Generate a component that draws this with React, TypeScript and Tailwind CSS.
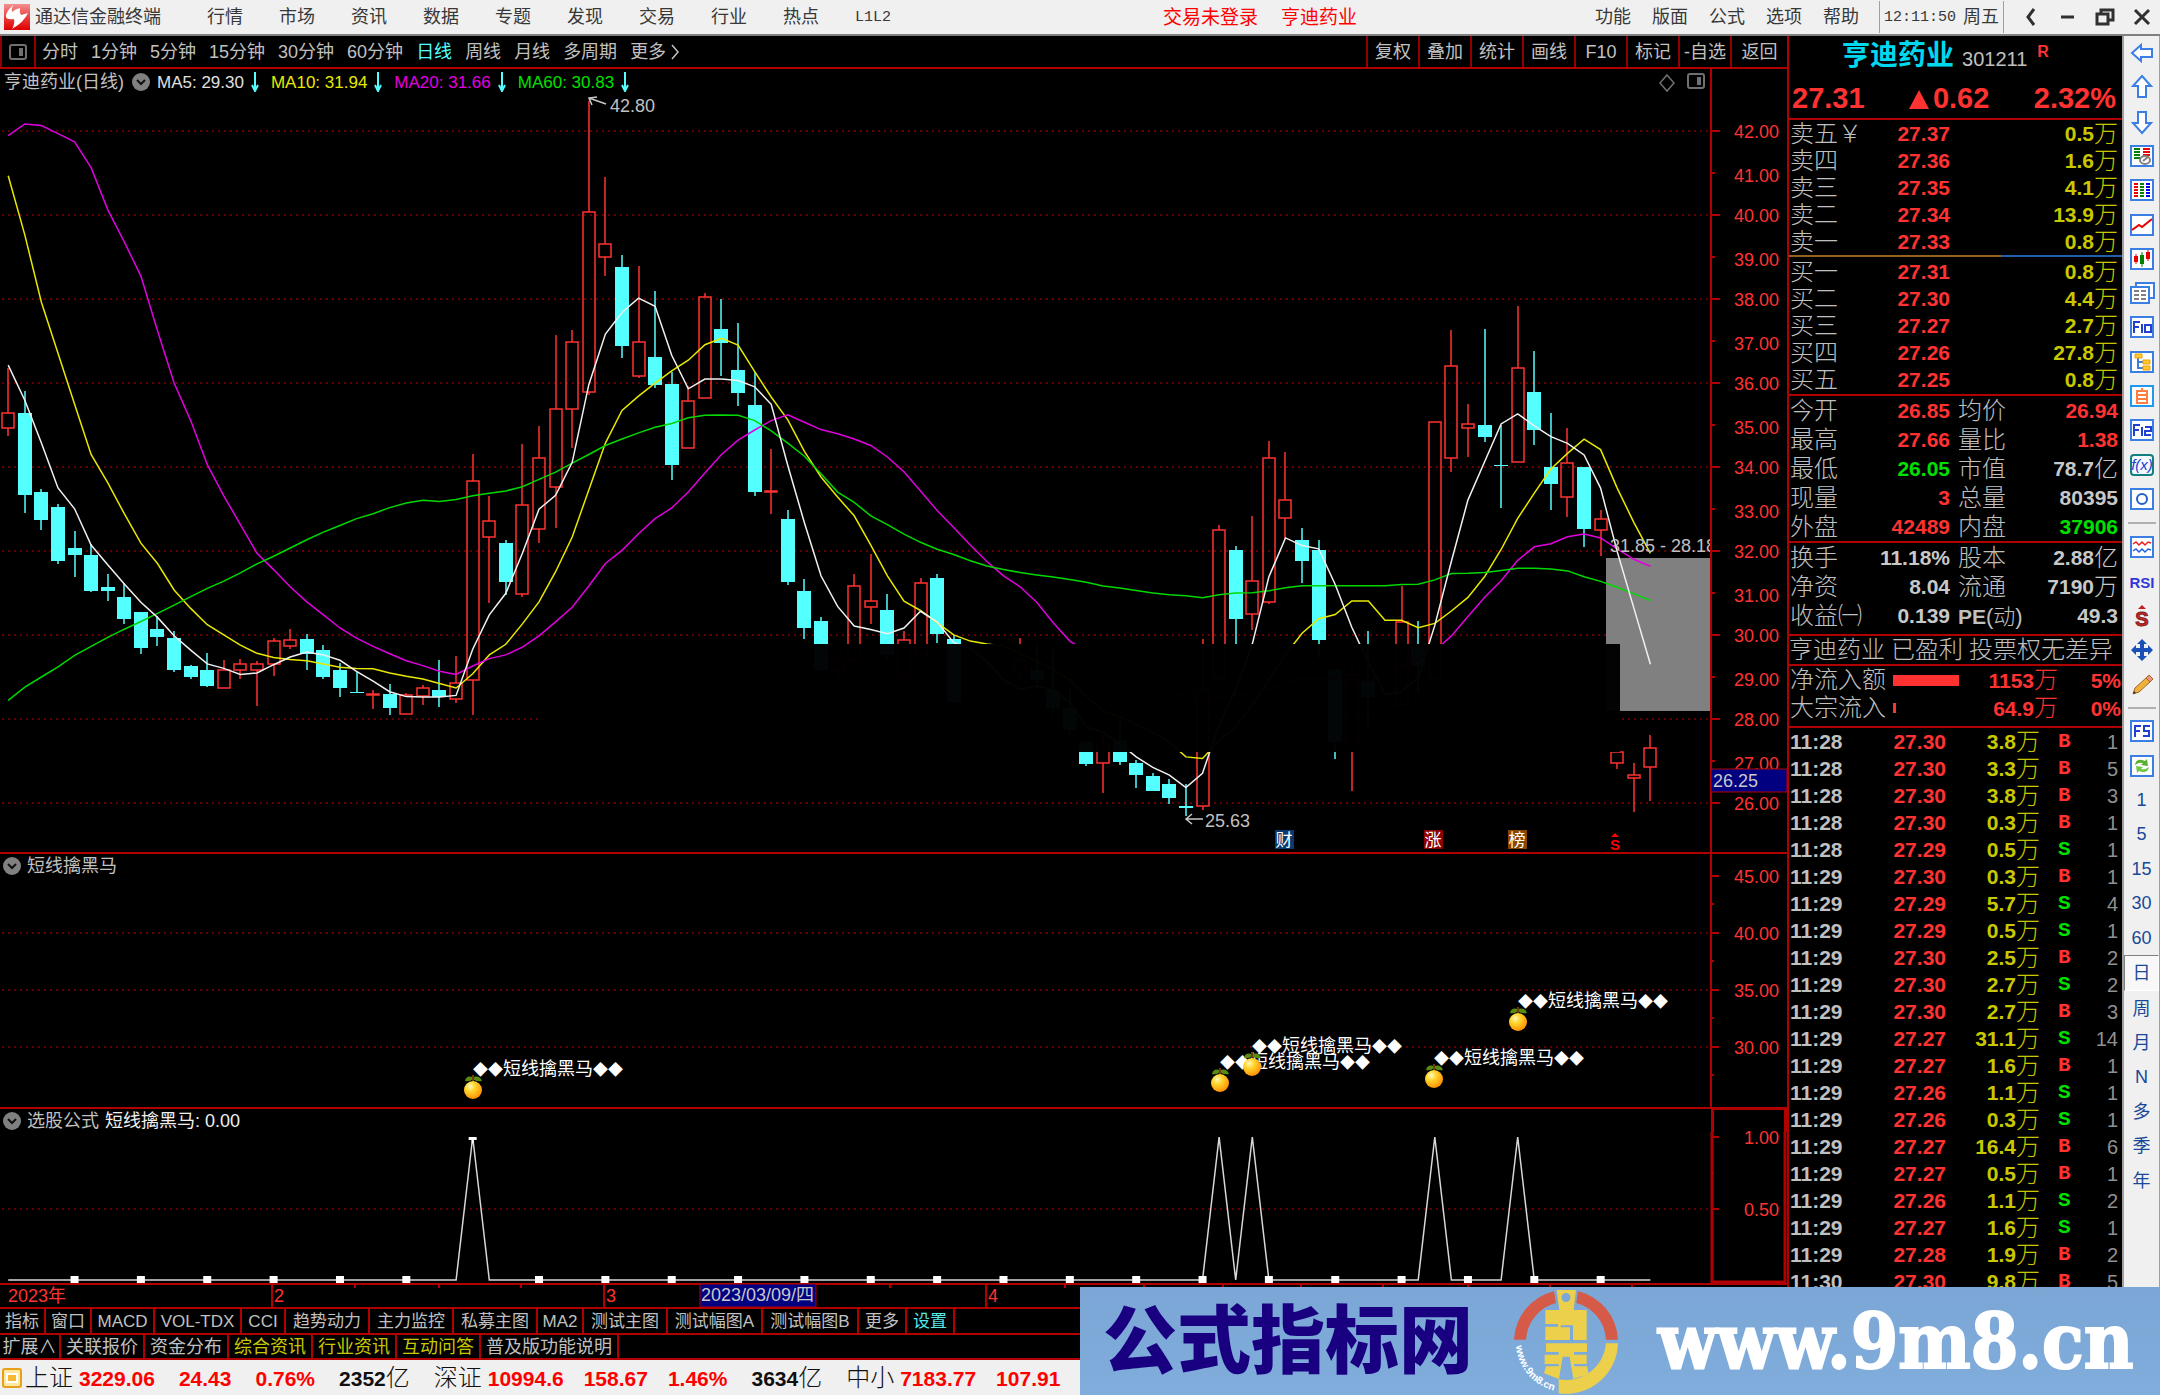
import React from "react";

type Candle = [kind: "u" | "d", high: number, top: number, bottom: number, low: number];

const RED = "#ff3232";
const LINE = "#b00000";
const CYAN = "#54ffff";
const STEP = 16.588;
const xAt = (i: number) => 8.2 + i * STEP;

/* Daily candles, from the oldest to the newest. */
const candles: (Candle | null)[] = [
  ["u", 368, 413, 428, 436], ["d", 391, 413, 495, 513], ["d", 489, 492, 520, 530], ["d", 504, 507, 561, 564],
  ["d", 531, 548, 555, 577], ["d", 544, 555, 591, 592], ["d", 574, 587, 591, 601], ["d", 583, 597, 619, 624],
  ["d", 612, 612, 648, 654], ["d", 616, 629, 637, 646], ["d", 631, 638, 670, 672], ["d", 665, 666, 677, 679],
  ["d", 653, 670, 686, 687], ["u", 660, 670, 688, 688], ["u", 659, 664, 670, 679], ["u", 661, 664, 670, 706],
  ["u", 638, 641, 664, 676], ["u", 629, 640, 646, 649], ["d", 634, 639, 654, 670], ["d", 645, 650, 677, 679],
  ["d", 663, 670, 688, 697], ["d", 672, 692, 693, 693], ["u", 690, 694, 695, 709], ["d", 684, 694, 708, 715],
  ["u", 693, 695, 714, 714], ["u", 685, 688, 696, 705], ["d", 660, 690, 697, 707], ["u", 656, 683, 699, 703],
  ["u", 454, 481, 680, 715], ["u", 496, 521, 537, 603], ["d", 540, 543, 582, 595], ["u", 444, 505, 594, 597],
  ["u", 426, 458, 529, 543], ["u", 335, 409, 487, 528], ["u", 330, 342, 409, 448], ["u", 101, 212, 392, 395],
  ["u", 177, 244, 257, 276], ["d", 255, 267, 346, 358], ["u", 266, 342, 376, 378], ["d", 291, 357, 385, 388],
  ["d", 372, 384, 465, 480], ["u", 386, 401, 448, 448], ["u", 293, 297, 398, 398], ["d", 299, 329, 343, 376],
  ["d", 323, 370, 393, 406], ["d", 372, 405, 492, 496], ["u", 449, 491, 492, 514], ["d", 510, 519, 582, 585],
  ["d", 579, 591, 628, 639], ["d", 617, 621, 670, 670], ["u", 655, 662, 670, 678], ["u", 574, 586, 660, 660],
  ["u", 554, 601, 607, 624], ["d", 594, 610, 655, 660], ["u", 631, 640, 678, 678], ["u", 578, 583, 655, 655],
  ["d", 574, 578, 634, 643], ["d", 635, 639, 702, 702], null, null,
  null, ["u", 638, 660, 672, 680], ["d", 644, 670, 680, 690], ["d", 650, 690, 708, 715], ["d", 690, 708, 730, 735],
  ["d", 740, 742, 764, 766],
  ["u", 735, 744, 763, 793], ["d", 717, 740, 762, 765], ["d", 760, 763, 775, 788], ["d", 773, 776, 791, 791],
  ["d", 779, 784, 798, 804], ["d", 784, 806, 808, 816], ["u", 639, 690, 806, 810], ["u", 525, 530, 678, 685],
  ["d", 546, 550, 619, 644], ["u", 516, 581, 614, 630], ["u", 441, 458, 602, 604], ["u", 452, 500, 518, 539],
  ["d", 528, 540, 561, 583], ["d", 540, 550, 640, 658], ["d", 668, 670, 742, 759], ["u", 660, 674, 744, 791],
  ["d", 631, 682, 697, 728], null, ["u", 586, 622, 705, 705], ["d", 621, 647, 666, 693],
  ["u", 422, 422, 678, 678], ["u", 330, 366, 458, 472], ["u", 404, 424, 428, 457], ["d", 329, 425, 437, 442],
  ["d", 425, 465, 466, 508], ["u", 306, 368, 462, 462], ["d", 351, 392, 430, 445], ["d", 413, 467, 484, 510],
  ["u", 428, 463, 497, 517], ["d", 467, 467, 529, 547], ["u", 510, 519, 530, 556], ["u", 752, 752, 763, 769],
  ["u", 763, 775, 778, 812], ["u", 735, 748, 767, 801],
];

/* Moving averages: the first run holds days 0-65, the second one days 66-99. */
const average = (first: number[], second: number[]) =>
  [...first.map((v) => 90 + v * 0.4082), ...second.map((v) => 250 + v * 0.389)]
    .map((y, i) => `${xAt(i).toFixed(1)},${y.toFixed(1)}`)
    .join(" ");

const averages = [
  {
    color: "#e8e800",
    points: average(
      [210, 355, 520, 645, 770, 893, 962, 1038, 1110, 1160, 1225, 1270, 1310, 1335, 1360, 1380, 1390, 1395, 1398, 1406, 1414, 1417, 1418, 1428, 1436, 1443, 1454, 1465, 1430, 1384, 1358, 1308, 1254, 1180, 1095, 980, 865, 785, 750, 718, 688, 662, 624, 608, 625, 690, 752, 808, 885, 948, 997, 1043, 1115, 1190, 1252, 1275, 1305, 1335, 1350, 1357, 1362, 1380, 1400, 1420, 1445, 1485],
      [1185, 1200, 1220, 1240, 1265, 1303, 1307, 1262, 1225, 1170, 1105, 1040, 985, 948, 937, 902, 902, 952, 952, 971, 960, 928, 893, 840, 770, 690, 625, 563, 523, 486, 513, 612, 700, 780],
    ),
  },
  {
    color: "#e000e0",
    points: average(
      [112, 83, 87, 107, 127, 190, 293, 372, 456, 590, 718, 810, 918, 994, 1065, 1135, 1175, 1217, 1254, 1286, 1318, 1343, 1363, 1381, 1398, 1410, 1424, 1432, 1411, 1393, 1384, 1365, 1337, 1303, 1267, 1215, 1160, 1128, 1087, 1050, 1024, 985, 938, 893, 858, 833, 810, 796, 814, 832, 842, 855, 871, 899, 935, 982, 1030, 1072, 1115, 1155, 1190, 1217, 1255, 1305, 1350, 1375],
      [1080, 1095, 1110, 1125, 1140, 1145, 1150, 1150, 1145, 1140, 1130, 1115, 1100, 1100, 1100, 1105, 1110, 1090, 1070, 1050, 1030, 992, 942, 893, 850, 798, 763, 755, 737, 730, 740, 768, 795, 813],
    ),
  },
  {
    color: "#00d800",
    points: average(
      [1495, 1463, 1438, 1413, 1385, 1363, 1341, 1321, 1302, 1282, 1262, 1241, 1221, 1203, 1183, 1161, 1142, 1122, 1102, 1083, 1067, 1050, 1038, 1023, 1012, 1005, 1008, 1003, 994, 988, 982, 972, 954, 936, 914, 893, 871, 855, 840, 826, 817, 803, 797, 796, 797, 810, 835, 865, 897, 940, 985, 1010, 1043, 1065, 1088, 1108, 1125, 1138, 1153, 1166, 1175, 1182, 1188, 1193, 1199, 1206],
      [864, 869, 875, 882, 886, 889, 894, 886, 882, 881, 876, 868, 863, 863, 863, 863, 863, 863, 860, 859, 848, 832, 831, 829, 824, 818, 818, 820, 825, 840, 852, 867, 884, 901],
    ),
  },
  {
    color: "#f0f0f0",
    points: average(
      [674, 760, 865, 975, 1026, 1115, 1163, 1210, 1255, 1292, 1337, 1372, 1406, 1417, 1432, 1428, 1408, 1389, 1377, 1384, 1397, 1424, 1448, 1474, 1486, 1487, 1487, 1483, 1370, 1286, 1233, 1135, 1027, 993, 912, 722, 598, 545, 510, 530, 650, 732, 708, 708, 712, 727, 770, 920, 1060, 1190, 1265, 1313, 1322, 1332, 1318, 1277, 1303, 1354, 1368, 1400, 1445, 1468, 1460, 1470, 1500, 1560],
      [1240, 1268, 1303, 1330, 1350, 1382, 1345, 1220, 1130, 1013, 840, 740, 760, 768, 860, 970, 1060, 1143, 1135, 1100, 965, 800, 643, 545, 447, 421, 452, 480, 497, 527, 612, 775, 920, 1065],
    ),
  },
];

const prices = Array.from({ length: 17 }, (_, i) => 42 - i);
const signals = [
  { x: 473, y: 1090 }, { x: 1220, y: 1083 }, { x: 1252, y: 1067 }, { x: 1434, y: 1079 }, { x: 1518, y: 1022 },
];

const spikes = [28, 73, 75, 86, 91];
const signalLine = Array.from({ length: 100 }, (_, i) => `${xAt(i).toFixed(1)},${spikes.includes(i) ? 1137 : 1280}`).join(" ");

function Grid({ y }: { y: number }) {
  return <line x1="2" x2="1710" y1={y} y2={y} stroke="#c00000" strokeWidth="1" strokeDasharray="2 4" />;
}

function AxisLabel({ y, children }: { y: number; children: React.ReactNode }) {
  return (
    <text x="1779" y={y + 7} textAnchor="end" fontSize="18" fill={RED}>
      {children}
    </text>
  );
}

function Badge({ x, color, text }: { x: number; color: string; text: string }) {
  return (
    <g>
      <rect x={x} y="830" width="19" height="19" fill={color} />
      <text x={x + 9} y="846" textAnchor="middle" fontSize="17" fill="#fff">{text}</text>
    </g>
  );
}

function PriceChart() {
  return (
    <svg viewBox="0 95 1787 757" className="block w-full overflow-visible" role="img" aria-label="日线">
      {prices.filter((p) => p % 2 === 0).map((p) => <Grid key={p} y={131 + (42 - p) * 42} />)}
      <rect x="1606" y="558" width="104" height="153" fill="#808080" />
      {candles.map((c, i) => {
        if (!c) return null;
        const [kind, high, top, bottom, low] = c;
        const x = Math.round(xAt(i));
        return kind === "u" ? (
          <g key={i} stroke={RED} strokeWidth="1.5" fill="none">
            <path d={`M${x} ${high}V${top}M${x} ${bottom}V${low}`} />
            <rect x={x - 6} y={top} width="12" height={bottom - top} />
          </g>
        ) : (
          <g key={i} fill={CYAN}>
            <path d={`M${x} ${high}V${low}`} stroke={CYAN} strokeWidth="1.5" />
            <rect x={x - 7} y={top} width="14" height={bottom - top} />
          </g>
        );
      })}
      {averages.map((a) => (
        <polyline key={a.color} points={a.points} fill="none" stroke={a.color} strokeWidth="1.5" />
      ))}
      <rect x="538" y="644" width="1082" height="108" fill="#000" fillOpacity="0.975" />
      <g fill="none" stroke="#c8c8c8" strokeWidth="1.5">
        <path d="M606 104L589 98M597 97L589 98L592 105" />
        <path d="M1203 819H1186M1192 814L1186 819L1192 824" />
      </g>
      <g fontSize="18" fill="#c0c0c0">
        <text x="610" y="112">42.80</text>
        <text x="1205" y="827">25.63</text>
        <svg x="1600" y="530" width="110" height="28">
          <text x="10" y="22">31.85 - 28.18</text>
        </svg>
      </g>
      <Badge x={1275} color="#083a70" text="财" />
      <Badge x={1424} color="#8b0000" text="涨" />
      <Badge x={1508} color="#8a4500" text="榜" />
      <path d="M1611 837L1615 833L1619 837Z" fill="#ff0000" />
      <text x="1615" y="850" textAnchor="middle" fontSize="15" fontWeight="700" fill="#ff0000">S</text>
      <path d="M1711 95V852" stroke={LINE} strokeWidth="2" />
      {prices.map((p) => {
        const y = 131 + (42 - p) * 42;
        const even = p % 2 === 0;
        return (
          <g key={p}>
            <path d={`M1711 ${y}h${even ? 9 : 4}`} stroke={LINE} strokeWidth="2" />
            <AxisLabel y={even ? y : y + 2}>{p.toFixed(2)}</AxisLabel>
          </g>
        );
      })}
      <rect x="1711" y="769" width="76" height="23" fill="#000080" stroke={LINE} />
      <text x="1713" y="787" fontSize="18" fill="#c8c8c8">26.25</text>
    </svg>
  );
}

function Orange({ x, y }: { x: number; y: number }) {
  return (
    <g>
      <path d={`M${x - 8} ${y - 9}q1-6 8-4q7-2 9 4q-6 1-9-2q-3 3-8 2Z`} fill="#5a8a10" />
      <path d={`M${x} ${y - 8}V${y - 15}`} stroke="#6a3a10" strokeWidth="2" />
      <circle cx={x} cy={y} r="9" fill="url(#orange)" />
    </g>
  );
}

function SignalChart() {
  return (
    <svg viewBox="0 877 1787 230" className="block w-full overflow-visible" role="img" aria-label="短线擒黑马">
      <defs>
        <radialGradient id="orange" cx="0.35" cy="0.3" r="0.75">
          <stop offset="0" stopColor="#fff8c0" />
          <stop offset="0.35" stopColor="#ffd830" />
          <stop offset="1" stopColor="#ff8c00" />
        </radialGradient>
      </defs>
      {[933, 990, 1047].map((y) => <Grid key={y} y={y} />)}
      {signals.map((s) => (
        <text key={s.x} x={s.x} y={s.y - 15} fontSize="18" fill="#fff">
          <tspan fontSize="15">◆◆</tspan>短线擒黑马<tspan fontSize="15">◆◆</tspan>
        </text>
      ))}
      {signals.map((s) => <Orange key={s.x} {...s} />)}
      <path d="M1711 877V1107" stroke={LINE} strokeWidth="2" />
      {[876, 933, 990, 1047].map((y, i) => (
        <g key={y}>
          <path d={`M1711 ${y}h8M1711 ${y + 28}h3`} stroke={LINE} strokeWidth="2" />
          <AxisLabel y={y}>{(45 - i * 5).toFixed(2)}</AxisLabel>
        </g>
      ))}
    </svg>
  );
}

function FormulaChart() {
  return (
    <svg viewBox="0 1132 1787 151" className="block w-full overflow-visible" role="img" aria-label="选股公式">
      <Grid y={1209} />
      <polyline points={signalLine} fill="none" stroke="#d8d8d8" strokeWidth="1.5" />
      {Array.from({ length: 24 }, (_, i) => (i + 1) * 4).map((i) =>
        i === 28 ? (
          <path key={i} d={`M${xAt(i) - 4} 1137h8v3h-3v3h-2v-3h-3Z`} fill="#fff" />
        ) : (
          <rect key={i} x={xAt(i) - 4} y="1276" width="8" height="7" fill="#fff" />
        ),
      )}
      <path d="M1712 1132V1282H1785V1132" fill="none" stroke={LINE} strokeWidth="3" />
      <path d="M1711 1137h8M1711 1173h3M1711 1209h8" stroke={LINE} strokeWidth="2" />
      <AxisLabel y={1137}>1.00</AxisLabel>
      <AxisLabel y={1209}>0.50</AxisLabel>
    </svg>
  );
}

function DateAxis() {
  return (
    <svg viewBox="0 1282 1787 24" className="block w-full" role="img" aria-label="日期">
      <path d="M0 1283H1787M272 1283V1306M604 1283V1306M986 1283V1306" stroke={LINE} strokeWidth="2" />
      <path d="M355 1283v4M439 1283v4M521 1283v4M890 1283v4M1065 1283v4M1144 1283v4M1223 1283v4M1301 1283v4M1383 1283v4M1468 1283v4M1550 1283v4M1632 1283v4" stroke={LINE} strokeWidth="2" />
      <rect x="700" y="1283" width="116" height="23" fill="#000080" stroke={LINE} />
      <g fontSize="18" fill={RED}>
        <text x="8" y="1301">2023年</text>
        <text x="274" y="1301">2</text>
        <text x="606" y="1301">3</text>
        <text x="988" y="1301">4</text>
        <text x="701" y="1300" fill="#c8c8c8">2023/03/09/四</text>
      </g>
    </svg>
  );
}

function Toggle() {
  return (
    <button aria-label="展开" className="block size-[18px] shrink-0">
      <svg viewBox="0 0 18 18" className="size-full">
        <circle cx="9" cy="9" r="9" fill="#808080" />
        <path d="M5 7l4 4 4-4" fill="none" stroke="#101010" strokeWidth="2" />
      </svg>
    </button>
  );
}

function DownArrow() {
  return (
    <svg viewBox="0 0 8 20" className="mr-3 ml-[7px] h-5 w-2">
      <path d="M4 0V18M1 13l3 6 3-6" fill="none" stroke={CYAN} strokeWidth="2" />
    </svg>
  );
}

function PaneIcon() {
  return (
    <svg viewBox="0 0 18 16" className="h-4 w-[18px]">
      <rect x="1" y="1" width="16" height="14" rx="2" fill="none" stroke="#707070" strokeWidth="2" />
      <rect x="10" y="4" width="4" height="8" fill="#707070" />
    </svg>
  );
}

const menu = ["行情", "市场", "资讯", "数据", "专题", "发现", "交易", "行业", "热点", "L1L2"];
const tools = ["功能", "版面", "公式", "选项", "帮助"];

function TitleBar() {
  return (
    <header className="flex h-9 items-center border-b-2 border-[#808080] bg-[#f0f0f0] text-[18px] leading-none text-[#383838]">
      <svg viewBox="0 0 26 26" className="ml-1 h-[26px] w-[26px]">
        <defs>
          <linearGradient id="logo" x1="0" y1="0" x2="0" y2="1">
            <stop offset="0" stopColor="#f49090" />
            <stop offset="0.5" stopColor="#e84040" />
            <stop offset="1" stopColor="#e00000" />
          </linearGradient>
        </defs>
        <rect width="26" height="26" fill="url(#logo)" />
        <path d="M9 1Q1 9 2 13Q3 16 10 15Q11 20 8 25Q20 18 24 9L17 11Q15 8 16 4Q11 5 8 8Q7 5 9 1Z" fill="#fff" />
      </svg>
      <h1 className="ml-[5px]">通达信金融终端</h1>
      <nav className="ml-[46px] flex gap-9">
        {menu.map((m) => <button key={m} className={m === "L1L2" ? "font-['Liberation_Mono'] text-[15px]" : ""}>{m}</button>)}
      </nav>
      <div className="flex-1" />
      <div className="mr-[238px] flex gap-[23px] text-[19px] text-[#ff0000]">
        <button>交易未登录</button>
        <button>亨迪药业</button>
      </div>
      <nav className="flex gap-[21px]">
        {tools.map((m) => <button key={m}>{m}</button>)}
      </nav>
      <p className="ml-5 flex h-8 w-[125px] items-center justify-between border-x border-[#a0a0a0] px-1">
        <time className="font-['Liberation_Mono'] text-[15px]">12:11:50</time>
        <span>周五</span>
      </p>
      <div className="flex w-[156px] items-center justify-around pl-2">
        <button aria-label="后退"><svg viewBox="0 0 20 20" className="size-5"><path d="M13 2L7 10l6 8" fill="none" stroke="#303030" strokeWidth="3" /></svg></button>
        <button aria-label="最小化"><svg viewBox="0 0 20 20" className="size-5"><path d="M3 10H16" stroke="#303030" strokeWidth="3" /></svg></button>
        <button aria-label="还原"><svg viewBox="0 0 20 20" className="size-5"><path d="M2 7H13V17H2ZM6 6V3H18V13H14" fill="none" stroke="#303030" strokeWidth="3" /></svg></button>
        <button aria-label="关闭"><svg viewBox="0 0 20 20" className="size-5"><path d="M3 3L17 17M17 3L3 17" stroke="#303030" strokeWidth="3" /></svg></button>
      </div>
    </header>
  );
}

const periods = ["分时", "1分钟", "5分钟", "15分钟", "30分钟", "60分钟", "日线", "周线", "月线", "多周期", "更多"];
const actions = ["复权", "叠加", "统计", "画线", "F10", "标记", "-自选", "返回"];

function PeriodBar() {
  return (
    <div className="flex h-[33px] items-stretch border-b-2 border-[#b00000] text-[18px] leading-none text-[#c0c0c0]">
      <button aria-label="侧栏" className="flex w-9 items-center justify-center border-x-2 border-[#900000]"><PaneIcon /></button>
      <nav className="ml-1.5 flex items-center gap-[13px]">
        {periods.map((p) => (
          <button key={p} className={p === "日线" ? "text-[#54ffff]" : ""}>{p}</button>
        ))}
        <svg viewBox="0 0 8 16" className="-ml-2 h-4 w-2"><path d="M1 1l6 7-6 7" fill="none" stroke="#c0c0c0" strokeWidth="1.5" /></svg>
      </nav>
      <div className="flex-1" />
      <div className="flex w-[421px]">
        {actions.map((a) => <button key={a} className="w-[52px] border-l-2 border-[#900000] whitespace-nowrap last:flex-1">{a}</button>)}
      </div>
    </div>
  );
}

const legend = [
  { text: "MA5: 29.30", cls: "text-[#e0e0e0]" },
  { text: "MA10: 31.94", cls: "text-[#e8e800]" },
  { text: "MA20: 31.66", cls: "text-[#e000e0]" },
  { text: "MA60: 30.83", cls: "text-[#00e000]" },
];

const tabs: { t: string; w: string; on?: boolean }[] = [
  { t: "指标", w: "w-[46px]" }, { t: "窗口", w: "w-[46px]" }, { t: "MACD", w: "w-[63px]" }, { t: "VOL-TDX", w: "w-[87px]" },
  { t: "CCI", w: "w-[44px]" }, { t: "趋势动力", w: "w-[84px]" }, { t: "主力监控", w: "w-[84px]" }, { t: "私募主图", w: "w-[84px]" },
  { t: "MA2", w: "w-[46px]" }, { t: "测试主图", w: "w-[84px]" }, { t: "测试幅图A", w: "w-[95px]" }, { t: "测试幅图B", w: "w-[96px]" },
  { t: "更多", w: "w-[48px]" }, { t: "设置", w: "w-[48px]", on: true },
];

const links: { t: string; w: string; on?: boolean }[] = [
  { t: "扩展∧", w: "w-[61px]" }, { t: "关联报价", w: "w-[84px]" }, { t: "资金分布", w: "w-[84px]" }, { t: "综合资讯", w: "w-[84px]", on: true },
  { t: "行业资讯", w: "w-[84px]", on: true }, { t: "互动问答", w: "w-[84px]", on: true }, { t: "普及版功能说明", w: "w-[138px]" },
];

function PaneHeader({ children, boxed }: { children: React.ReactNode; boxed?: boolean }) {
  return (
    <div className="flex h-[25px] border-t-2 border-[#b00000] text-[18px] leading-none">
      <div className="flex flex-1 items-center gap-1.5 pl-[3px] text-[#c0c0c0]">{children}</div>
      <div className={boxed ? "w-[76px] border-x-3 border-t border-[#b00000]" : "w-[77px] border-l-2 border-[#b00000]"} />
    </div>
  );
}

function Charts() {
  return (
    <main className="flex min-w-0 flex-1 flex-col">
      <PeriodBar />
      <div className="flex h-[26px] text-[17px] leading-none">
        <div className="flex flex-1 items-center pl-1">
          <span className="mr-2 text-[18px] text-[#c0c0c0]">亨迪药业(日线)</span>
          <Toggle />
          <span className="w-[7px]" />
          {legend.map((l) => (
            <React.Fragment key={l.text}>
              <span className={l.cls}>{l.text}</span>
              <DownArrow />
            </React.Fragment>
          ))}
        </div>
        <svg viewBox="0 0 16 20" className="mt-1 mr-3 h-5 w-4"><path d="M8 2l7 8-7 8-7-8Z" fill="none" stroke="#707070" strokeWidth="1.5" /></svg>
        <span className="mt-1 mr-[5px]"><PaneIcon /></span>
        <div className="w-[77px] border-l-2 border-[#b00000]" />
      </div>
      <PriceChart />
      <PaneHeader><Toggle /><span>短线擒黑马</span></PaneHeader>
      <SignalChart />
      <PaneHeader boxed><Toggle /><span>选股公式</span><span className="text-[#f0f0f0]">短线擒黑马: 0.00</span></PaneHeader>
      <FormulaChart />
      <DateAxis />
      <div className="flex h-[26px] border-t-2 border-[#b00000] text-[18px] leading-none text-[#c0c0c0]">
        {tabs.map((t) => (
          <button key={t.t} className={`${t.w} ${t.on ? "text-[#54e8e8]" : ""} border-r-2 border-[#b00000] text-[17px] whitespace-nowrap`}>{t.t}</button>
        ))}
      </div>
      <div className="flex h-[27px] border-y-2 border-[#b00000] text-[18px] leading-none text-[#c0c0c0]">
        {links.map((t) => (
          <button key={t.t} className={`${t.w} ${t.on ? "text-[#c8c800]" : ""} border-r-2 border-[#b00000] whitespace-nowrap`}>{t.t}</button>
        ))}
      </div>
    </main>
  );
}

/* A number in bold digits followed by its unit. */
function Num({ v, unit }: { v: string; unit?: string }) {
  return (
    <span className="flex items-center justify-end text-[21px] leading-none font-bold">
      {v}
      {unit && <span className="text-[24px] font-light">{unit}</span>}
    </span>
  );
}

const asks = [["卖五￥", "27.37", "0.5"], ["卖四", "27.36", "1.6"], ["卖三", "27.35", "4.1"], ["卖二", "27.34", "13.9"], ["卖一", "27.33", "0.8"]];
const bids = [["买一", "27.31", "0.8"], ["买二", "27.30", "4.4"], ["买三", "27.27", "2.7"], ["买四", "27.26", "27.8"], ["买五", "27.25", "0.8"]];

function Depth({ rows }: { rows: string[][] }) {
  return (
    <table className="block">
      <tbody className="block">
        {rows.map(([label, price, volume]) => (
          <tr key={label} className="flex h-[27px] items-center">
            <th className="w-20 text-left text-[24px] leading-none font-light whitespace-nowrap text-[#c0c0c0]">{label}</th>
            <td className="w-20 text-[#ff3232]"><Num v={price} /></td>
            <td className="flex-1 text-[#c8c800]"><Num v={volume} unit="万" /></td>
          </tr>
        ))}
      </tbody>
    </table>
  );
}

const r = "text-[#ff3232]";
const g = "text-[#00e000]";
const w = "text-[#c8c8c8]";
type Fact = [label: string, value: string, unit: string, color: string, label2: string, value2: string, unit2: string, color2: string];
const day: Fact[] = [
  ["今开", "26.85", "", r, "均价", "26.94", "", r],
  ["最高", "27.66", "", r, "量比", "1.38", "", r],
  ["最低", "26.05", "", g, "市值", "78.7", "亿", w],
  ["现量", "3", "", r, "总量", "80395", "", w],
  ["外盘", "42489", "", r, "内盘", "37906", "", g],
];
const company: Fact[] = [
  ["换手", "11.18%", "", w, "股本", "2.88", "亿", w],
  ["净资", "8.04", "", w, "流通", "7190", "万", w],
  ["收益㈠", "0.139", "", w, "PE(动)", "49.3", "", w],
];

function Facts({ rows }: { rows: Fact[] }) {
  return (
    <table className="block">
      <tbody className="block">
        {rows.map(([a, v, u, c, a2, v2, u2, c2]) => (
          <tr key={a} className="flex h-[29px] items-center">
            <th className="w-[74px] text-left text-[24px] leading-none font-light whitespace-nowrap text-[#c0c0c0]">{a}</th>
            <td className={`w-[86px] ${c}`}><Num v={v} unit={u} /></td>
            <th className="ml-2 w-[66px] text-left text-[24px] leading-none font-light whitespace-nowrap text-[#c0c0c0]">
              {a2.startsWith("PE") ? <><span className="text-[21px] font-bold">PE</span><span className="text-[22px]">{a2.slice(2)}</span></> : a2}
            </th>
            <td className={`flex-1 ${c2}`}><Num v={v2} unit={u2} /></td>
          </tr>
        ))}
      </tbody>
    </table>
  );
}

const trades: [string, string, string, "B" | "S", string][] = [
  ["11:28", "27.30", "3.8", "B", "1"], ["11:28", "27.30", "3.3", "B", "5"], ["11:28", "27.30", "3.8", "B", "3"],
  ["11:28", "27.30", "0.3", "B", "1"], ["11:28", "27.29", "0.5", "S", "1"], ["11:29", "27.30", "0.3", "B", "1"],
  ["11:29", "27.29", "5.7", "S", "4"], ["11:29", "27.29", "0.5", "S", "1"], ["11:29", "27.30", "2.5", "B", "2"],
  ["11:29", "27.30", "2.7", "S", "2"], ["11:29", "27.30", "2.7", "B", "3"], ["11:29", "27.27", "31.1", "S", "14"],
  ["11:29", "27.27", "1.6", "B", "1"], ["11:29", "27.26", "1.1", "S", "1"], ["11:29", "27.26", "0.3", "S", "1"],
  ["11:29", "27.27", "16.4", "B", "6"], ["11:29", "27.27", "0.5", "B", "1"], ["11:29", "27.26", "1.1", "S", "2"],
  ["11:29", "27.27", "1.6", "S", "1"], ["11:29", "27.28", "1.9", "B", "2"], ["11:30", "27.30", "9.8", "B", "5"],
];

function QuotePanel() {
  return (
    <aside className="w-[335px] shrink-0 border-l-2 border-[#b00000]">
      <div className="flex h-[43px] items-center justify-center pr-5 pb-1 leading-none">
        <h2 className="text-[28px] font-bold text-[#00d8f0]">亨迪药业</h2>
        <span className="mt-1.5 ml-2 text-[20px] text-[#c0c0c0]">301211</span>
        <span className="mb-2 ml-2.5 text-[16px] font-bold text-[#ff3232]">R</span>
      </div>
      <div className="flex h-[39px] items-center justify-between pr-1.5 pl-[3px] text-[29px] leading-none font-bold text-[#ff3232]">
        <span>27.31</span>
        <span className="flex items-center gap-1"><svg viewBox="0 0 20 20" className="size-5"><path d="M10 1L20 20H0Z" fill={RED} /></svg>0.62</span>
        <span>2.32%</span>
      </div>
      <section className="border-t-2 border-[#b00000] pr-1 pl-px"><Depth rows={asks} /></section>
      <div className="flex h-[2px]"><span className="w-[212px] bg-[#95611f]" /><span className="flex-1 bg-[#1f5fae]" /></div>
      <section className="pt-px pr-1 pb-px pl-px"><Depth rows={bids} /></section>
      <section className="border-t-2 border-[#b00000] pr-1 pl-px"><Facts rows={day} /></section>
      <section className="border-t-2 border-[#b00000] pr-1 pb-1 pl-px"><Facts rows={company} /></section>
      <p className="flex h-[30px] items-center gap-1.5 border-t-2 border-[#b00000] text-[24px] leading-none font-light text-[#c0c0c0]">
        <span>亨迪药业</span><span>已盈利</span><span>投票权无差异</span>
      </p>
      <section className="border-t-2 border-[#b00000] pr-px pb-1 pl-px text-[#ff3232]">
        <div className="flex h-7 items-center">
          <span className="w-[103px] text-[24px] leading-none font-light text-[#c0c0c0]">净流入额</span>
          <span className="h-[11px] w-[66px] bg-[#ff3232]" />
          <span className="flex-1"><Num v="1153" unit="万" /></span>
          <span className="w-[63px]"><Num v="5%" /></span>
        </div>
        <div className="flex h-7 items-center">
          <span className="w-[103px] text-[24px] leading-none font-light text-[#c0c0c0]">大宗流入</span>
          <span className="h-[10px] w-[3px] bg-[#ff3232]" />
          <span className="flex-1"><Num v="64.9" unit="万" /></span>
          <span className="w-[63px]"><Num v="0%" /></span>
        </div>
      </section>
      <table className="block border-t-2 border-[#b00000] pr-1 pl-px">
        <tbody className="block">
          {trades.map(([time, price, volume, side, count], i) => (
            <tr key={i} className="flex h-[27px] items-center text-[21px] leading-none font-bold">
              <td className="w-[76px] text-[#c0c0c0]">{time}</td>
              <td className="w-20 text-[#ff3232]"><Num v={price} /></td>
              <td className="w-[94px] text-[#c8c800]"><Num v={volume} unit="万" /></td>
              <td className={side === "B" ? "ml-[18px] font-['Liberation_Mono'] text-[#ff3232]" : "ml-[18px] font-['Liberation_Mono'] text-[#00e000]"}>{side}</td>
              <td className="flex-1 text-right text-[20px] font-normal text-[#909090]">{count}</td>
            </tr>
          ))}
        </tbody>
      </table>
    </aside>
  );
}

const blue = "#3b7fe4";
const stroke = { fill: "none", stroke: "#2040d0", strokeWidth: 2 };

function Box({ children, color = blue }: { children: React.ReactNode; color?: string }) {
  return (
    <>
      <rect x="1" y="1" width="22" height="20" fill="#fff" stroke={color} strokeWidth="2" />
      {children}
    </>
  );
}

const quoteIcons: { name: string; art: React.ReactNode }[] = [
  { name: "后退", art: <path d="M2 11L11 3V7H22V15H11V19Z" fill="#fff" stroke={blue} strokeWidth="2" /> },
  { name: "上翻", art: <path d="M12 0L21 10H16V21H8V10H3Z" fill="#fff" stroke={blue} strokeWidth="2" /> },
  { name: "下翻", art: <path d="M12 22L21 12H16V1H8V12H3Z" fill="#fff" stroke={blue} strokeWidth="2" /> },
  {
    name: "报价",
    art: <Box><path d="M4 4H10M4 7H10M4 10H10M4 13H10" stroke="#008000" strokeWidth="2" /><path d="M13 4H20M13 7H20M13 10H20" stroke="#f00000" strokeWidth="2" /><ellipse cx="15" cy="15" rx="5" ry="4" fill="#fff" stroke="#808080" strokeWidth="2" /><path d="M13 16l5-4" stroke="#808080" strokeWidth="2" /></Box>,
  },
  {
    name: "分时表",
    art: <Box>{[["#f00000", 4], ["#008000", 10], ["#0000f0", 16]].map(([c, x]) => <path key={c} d={`M${x} 5h4m-4 3h4m-4 3h4m-4 3h4m-4 3h4`} stroke={String(c)} strokeWidth="2" />)}</Box>,
  },
  { name: "走势", art: <Box><path d="M2 16L9 11L12 13L17 9L22 5" fill="none" stroke="#e80000" strokeWidth="2" /></Box> },
  {
    name: "K线",
    art: <Box><path d="M6 6V16M18 2V13" stroke="#e80000" /><path d="M12 4V19" stroke="#008000" /><path d="M4 8h4v6H4ZM16 4h4v7h-4Z" fill="#e80000" /><path d="M10 7h4v9h-4Z" fill="#008000" /></Box>,
  },
  { name: "多窗口", art: <><path d="M6 5V1H24V16H20" fill="#fff" stroke={blue} strokeWidth="2" /><rect x="1" y="5" width="18" height="16" fill="#fff" stroke={blue} strokeWidth="2" /><path d="M4 9H9M4 13H9M4 17H9M11 9H16M11 13H16M11 17H16" stroke="#808080" strokeWidth="2" /></> },
  { name: "F10", art: <Box><path d="M4 17V6H10M4 11H9M12 8V17M15 9H21V16H15Z" {...stroke} /></Box> },
  { name: "板块", art: <Box><path d="M8 6V17H13M8 11H13" fill="none" stroke={blue} strokeWidth="2" /><path d="M5 3H12V7H5ZM13 9H20V13H13ZM13 15H20V19H13Z" fill="#ffc830" stroke="#f0a000" /></Box> },
  { name: "自选", art: <Box color="#2098f0"><path d="M12 3V6M7 6H17V18H7ZM7 10H17M7 14H17" fill="none" stroke="#ff7f40" strokeWidth="2" /></Box> },
  { name: "F12", art: <Box><path d="M4 17V6H10M4 11H9M12 8V17M15 8H21V12H15V16H21" {...stroke} /></Box> },
  { name: "公式", art: <><rect x="1" y="1" width="22" height="20" rx="3" fill="#f4f8ff" stroke="#108080" strokeWidth="2" /><text x="12" y="16" textAnchor="middle" fontSize="15" fontStyle="italic" fill="#2040d0">f(x)</text></> },
  { name: "刷新", art: <Box><circle cx="12" cy="11" r="5" fill="none" stroke="#2060c8" strokeWidth="2" /></Box> },
];

const drawIcons: { name: string; art: React.ReactNode }[] = [
  { name: "指标", art: <Box><path d="M3 8l3-2 3 3 3-3 3 3 3-3 3 1" fill="none" stroke="#e82020" strokeWidth="1.5" /><path d="M3 15l3-2 3 3 3-3 3 3 3-3 3 1" fill="none" stroke="#2060e0" strokeWidth="1.5" /></Box> },
  { name: "RSI", art: <text x="12" y="17" textAnchor="middle" fontSize="15" fontWeight="700" fill="#3038d8">RSI</text> },
  { name: "财务", art: <><path d="M8 4L12 0L16 4Z" fill="#c02020" /><text x="12" y="21" textAnchor="middle" fontSize="20" fontWeight="700" fill="#c82828" stroke="#802020">S</text></> },
  { name: "移动", art: <path d="M12 0L17 5H14V9H18V6L23 11L18 16V13H14V17H17L12 22L7 17H10V13H6V16L1 11L6 6V9H10V5H7Z" fill="#1850b8" /> },
  { name: "画笔", art: <><path d="M3 20L5 14L16 4L20 8L9 18Z" fill="#f0b040" stroke="#a06820" /><path d="M16 4L19 1L23 5L20 8Z" fill="#f09090" stroke="#a06820" /><path d="M3 20L4 17L6 19Z" fill="#303030" /></> },
];

const rangeLabels = ["1", "5", "15", "30", "60", "日", "周", "月", "N", "多", "季", "年"];

function IconButton({ name, art }: { name: string; art: React.ReactNode }) {
  return (
    <button aria-label={name} className="flex flex-1 items-center">
      <svg viewBox="0 0 24 22" className="block h-[22px] w-6 overflow-visible">{art}</svg>
    </button>
  );
}

function ToolBar() {
  return (
    <nav className="flex w-[38px] shrink-0 flex-col items-center border-r border-l-2 border-[#a0a0a0] bg-[#f0f0f0]">
      <div className="flex h-[480px] flex-col items-center">
        {quoteIcons.map((i) => <IconButton key={i.name} {...i} />)}
      </div>
      <hr className="my-[6px] w-7 border-t-2 border-[#b0b0b0]" />
      <div className="flex h-[172px] flex-col items-center">
        {drawIcons.map((i) => <IconButton key={i.name} {...i} />)}
      </div>
      <hr className="my-[5px] w-7 border-t-2 border-[#b0b0b0]" />
      <div className="flex h-[484px] w-full flex-col items-center text-[18px] leading-none text-[#184898]">
        <IconButton name="F5" art={<Box><path d="M5 17V6H11M5 11H10M20 6H14V11H19V16H13" {...stroke} /></Box>} />
        <IconButton name="同步" art={<Box><path d="M5 10Q6 4 12 5L15 6L17 4L18 11L11 10L13 8Q9 7 5 10Z" fill="#58b030" /><path d="M19 12Q18 18 12 17L9 16L7 18L6 11L13 12L11 14Q15 15 19 12Z" fill="#70c848" /></Box>} />
        {rangeLabels.map((t) => (
          <button
            key={t}
            className={t === "日" ? "w-full flex-1 border border-t-[#808080] border-r-white border-b-white border-l-[#808080] bg-[#f8f8f8]" : "w-full flex-1"}
          >
            {t}
          </button>
        ))}
      </div>
    </nav>
  );
}

const indices = [
  { name: "上证", v: ["3229.06", "24.43", "0.76%"], amount: "2352", gap: "gap-6" },
  { name: "深证", v: ["10994.6", "158.67", "1.46%"], amount: "3634", gap: "gap-5" },
  { name: "中小", v: ["7183.77", "107.91"], amount: "", gap: "gap-5" },
];

function StatusBar() {
  return (
    <footer className="flex h-9 items-center gap-6 bg-[#f0f0f0] pl-0.5 leading-none text-[#101010]">
      {indices.map((x, i) => (
        <div key={x.name} className="flex items-center">
          {i === 0 && (
            <svg viewBox="0 0 20 20" className="mr-[3px] size-5">
              <rect x="1" y="1" width="18" height="18" rx="2" fill="#ffe8a0" stroke="#e8a018" strokeWidth="2" />
              <rect x="5" y="6" width="10" height="8" fill="#f8b830" stroke="#fff" strokeWidth="2" />
            </svg>
          )}
          <span className="mr-1.5 text-[24px] font-light">{x.name}</span>
          <span className={`flex text-[21px] font-bold text-[#ff0000] ${x.gap}`}>
            {x.v.map((n) => <span key={n}>{n}</span>)}
          </span>
          {x.amount && (
            <span className="ml-6 flex items-center text-[21px] font-bold">
              {x.amount}<span className="text-[24px] font-light">亿</span>
            </span>
          )}
        </div>
      ))}
    </footer>
  );
}

function SiteBanner() {
  return (
    <a
      href="#site"
      className="absolute right-0 bottom-0 flex h-[109px] w-1/2 items-center overflow-hidden bg-linear-to-b from-[#7ba6d5] to-[#80addc] pl-[23px] leading-none whitespace-nowrap"
    >
      <span className="w-[411px] text-[74px] font-black text-[#180080]">公式指标网</span>
      <svg viewBox="0 0 312 312" className="h-[104px] w-[104px] shrink-0">
        <path d="M0 149A156 156 0 0 1 120 4L126 39A120 120 0 0 0 36 149ZM192 4A156 156 0 0 1 312 149H276A120 120 0 0 0 187 39Z" fill="#d65a48" />
        <path d="M312 160A156 156 0 0 1 134 310V268A120 120 0 0 0 276 160Z" fill="#ecd04c" />
        <path
          fillRule="evenodd"
          d="M128 0H186L179 60H218V150H177V106H140V112H168V150H94V110H132V102H94V60H136ZM156 9A13 13 0 1 0 156 36A13 13 0 1 0 156 9Z"
          fill="#ecd04c"
        />
        <path d="M96 160H219V186H180V194H218V222H180V229H219L224 252L178 267L167 200H146L135 267L90 250L96 229H134V222H92V194H134V186H96Z" fill="#ecd04c" />
        <path id="ring" d="M6 168A150 150 0 0 0 132 304" fill="none" />
        <text fontSize="31" fontWeight="700" fill="#fff"><textPath href="#ring">www.9m8.cn</textPath></text>
      </svg>
      <span className="ml-10 font-['DejaVu_Serif_Condensed','DejaVu_Serif'] text-[76px] font-bold text-white [-webkit-text-stroke:2px_white]">www.9m8.cn</span>
    </a>
  );
}

export default function App() {
  return (
    <div className="relative flex min-h-screen flex-col overflow-hidden bg-black font-['Liberation_Sans','Noto_Sans_CJK_SC',sans-serif]">
      <TitleBar />
      <div className="flex flex-1">
        <Charts />
        <QuotePanel />
        <ToolBar />
      </div>
      <StatusBar />
      <SiteBanner />
    </div>
  );
}
